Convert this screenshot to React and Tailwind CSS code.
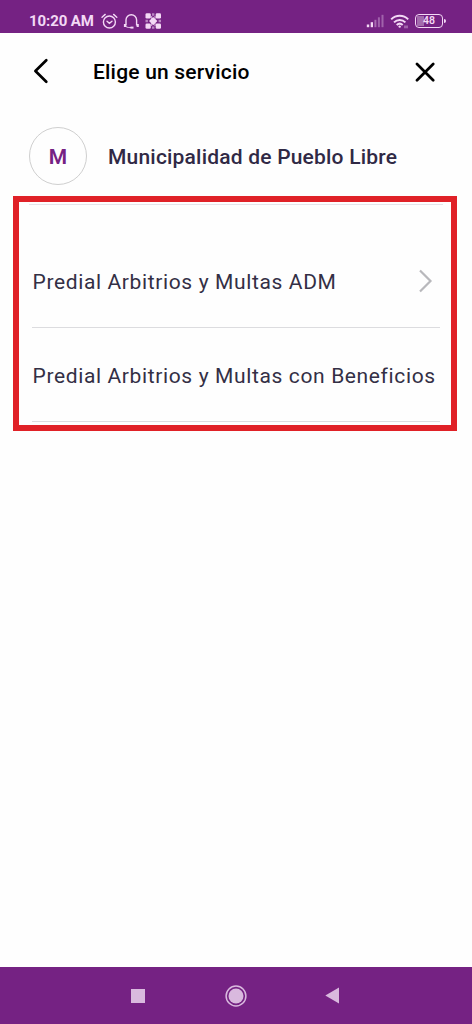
function StatusBar() {
  return (
    <div className="flex h-[33px] shrink-0 items-start bg-[#752283] pt-[11px] pl-[29px] text-[#f3d9f5]">
      <span className="w-[66px] text-[15px] leading-[20px] font-bold whitespace-nowrap tracking-[-0.1px]">10:20 AM</span>
      <svg className="ml-[6px] mt-[2px]" width="17" height="17" viewBox="0 0 17 17" fill="none" stroke="currentColor" strokeWidth="1.4" strokeLinecap="round">
        <circle cx="8.4" cy="9" r="6" />
        <path d="M1 4.2 4.2 1.4M15.8 4.2 12.6 1.4M6 8.3l2.4 2 2.6-2" />
      </svg>
      <svg className="ml-[5px] mt-[2px]" width="17" height="17" viewBox="0 0 17 17" fill="none" stroke="currentColor" strokeWidth="1.4">
        <path d="M3 12.5V7a5 5 0 0 1 10.6 0v5.5" />
        <path d="M2 11v3M14.7 11v3" strokeWidth="2.2" />
        <path d="M3 13.6c1.5 1 3.5 1 5 1" strokeWidth="1" />
        <path d="M7.5 14.6h3" strokeWidth="2" />
      </svg>
      <svg className="ml-[5px] mt-[2px]" width="17" height="17" viewBox="0 0 17 17" fill="currentColor">
        <rect x=".5" y=".3" width="5.3" height="5.3" rx="1.3" />
        <rect x="10.7" y=".3" width="5.3" height="5.3" rx="1.3" />
        <rect x=".5" y="10.5" width="5.3" height="5.3" rx="1.3" />
        <rect x="10.7" y="10.5" width="5.3" height="5.3" rx="1.3" />
        <path d="M8.2 4 12.4 8l-4.2 4.2L4 8z" />
        <path d="M7 .3h2.4v2.4H7zM7 13.4h2.4v2.4H7zM.5 6.8h2.4v2.4H.5zM13.6 6.8H16v2.4h-2.4z" opacity=".55" />
        <path d="M6 3h1.2v3H6zM9.4 3h1.2v3H9.4zM6 10h1.2v3H6zM9.4 10h1.2v3H9.4z" opacity=".65" />
      </svg>
      <svg className="ml-[204px] mt-[3px]" width="19" height="14" viewBox="0 0 19 14" fill="currentColor">
        <rect x=".8" y="10.5" width="2.4" height="2.7" />
        <rect x="4.7" y="8.2" width="2.3" height="5" />
        <rect x="8.4" y="5.8" width="2" height="7.4" opacity=".4" />
        <rect x="11.9" y="3.3" width="2" height="9.9" opacity=".35" />
        <rect x="15.5" y=".8" width="2" height="12.4" opacity=".35" />
      </svg>
      <svg className="ml-[5px] mt-[3px]" width="20" height="16" viewBox="0 0 20 16" fill="none" stroke="currentColor" strokeWidth="2">
        <path d="M1.2 5.4a12 12 0 0 1 17 0M4 8.4a8.2 8.2 0 0 1 11.4 0M6.7 11a4.5 4.5 0 0 1 6 0" />
        <circle cx="9.7" cy="12.6" r="1.2" fill="currentColor" stroke="none" />
        <path d="M15 11.5v2.8M17 11.5v2.8" strokeWidth="1" opacity=".7" />
      </svg>
      <div className="mt-[3px] ml-[5px] flex h-[14px] w-[28px] items-center justify-center rounded-[4px] border-[1.5px] border-[#f3d9f5] bg-[#752283] p-px">
        <div className="flex h-full w-full items-center justify-center bg-[linear-gradient(90deg,#a36bad_30%,#752283_30%)] text-[10.5px] leading-none font-semibold">48</div>
      </div>
      <div className="mt-[8px] ml-px h-[4px] w-[2px] rounded-r-sm bg-[#f3d9f5]" />
    </div>
  );
}

function Header() {
  return (
    <header className="flex h-[77px] shrink-0 items-center pl-[33px] text-black">
      <svg className="-mt-[2px]" width="16" height="26" viewBox="0 0 16 26" fill="none" stroke="currentColor" strokeWidth="2.7" strokeLinecap="round" strokeLinejoin="round">
        <path d="M13.3 2.2 2.4 13l10.9 10.8" />
      </svg>
      <h1 className="ml-[44px] w-[322px] text-[21px] leading-[24px] font-medium tracking-[0.2px]">Elige un servicio</h1>
      <svg width="20" height="20" viewBox="0 0 20 20" fill="none" stroke="currentColor" strokeWidth="2.7" strokeLinecap="round">
        <path d="m2 2 16.2 16.2M18.2 2 2 18.2" />
      </svg>
    </header>
  );
}

function Service({ name, arrow }) {
  return (
    <li className="ml-[13px] flex h-[94px] w-[408px] items-center border-b border-[#dcdcdf] text-[#332f45]">
      <span className="w-[386px] pt-[2px] pl-[0.5px] text-[21px] leading-[24px] tracking-[0.63px] whitespace-nowrap">{name}</span>
      {arrow && (
        <svg className="shrink-0" width="16" height="24" viewBox="0 0 16 24" fill="none" stroke="#b8b8bc" strokeWidth="2.2">
          <path d="M2 1.5 12.5 12 2 22.5" />
        </svg>
      )}
    </li>
  );
}

export default function App() {
  return (
    <div className="flex h-[1024px] w-[472px] flex-col overflow-hidden bg-[#fefefe] font-[Roboto,sans-serif]">
      <StatusBar />
      <Header />
      <main className="flex flex-1 flex-col">
        <div className="mt-[16px] ml-[29px] flex h-[59px] items-center">
          <div className="flex size-[58px] items-center justify-center rounded-full border border-[#cfcfcf] pt-[3px] text-[21px] leading-[24px] font-semibold text-[#752283]">M</div>
          <h2 className="ml-[21px] pt-[2px] text-[21px] leading-[24px] font-medium tracking-[0.2px] whitespace-nowrap text-[#302945]">Municipalidad de Pueblo Libre</h2>
        </div>
        <section className="mt-[11px] ml-[13px] h-[235px] w-[444px] border-[6px] border-[#e02127]">
          <div className="mt-[2px] ml-[10px] h-px w-[414px] bg-[#e6e3e9]" />
          <ul className="mt-[29px]">
            <Service name="Predial Arbitrios y Multas ADM" arrow />
            <Service name="Predial Arbitrios y Multas con Beneficios" />
          </ul>
        </section>
      </main>
      <nav className="flex h-[57px] shrink-0 items-center bg-[#752283] pl-[131px] text-[#d9b9de]">
        <div className="size-[14px] bg-current" />
        <svg className="ml-[80px]" width="22" height="22" viewBox="0 0 22 22" fill="currentColor">
          <circle cx="11" cy="11" r="7.5" />
          <circle cx="11" cy="11" r="9.9" fill="none" stroke="currentColor" strokeWidth="1.5" />
        </svg>
        <svg className="ml-[78px]" width="15" height="17" viewBox="0 0 15 17" fill="currentColor">
          <path d="M.3 8.5 14 .5v16z" />
        </svg>
      </nav>
    </div>
  );
}
